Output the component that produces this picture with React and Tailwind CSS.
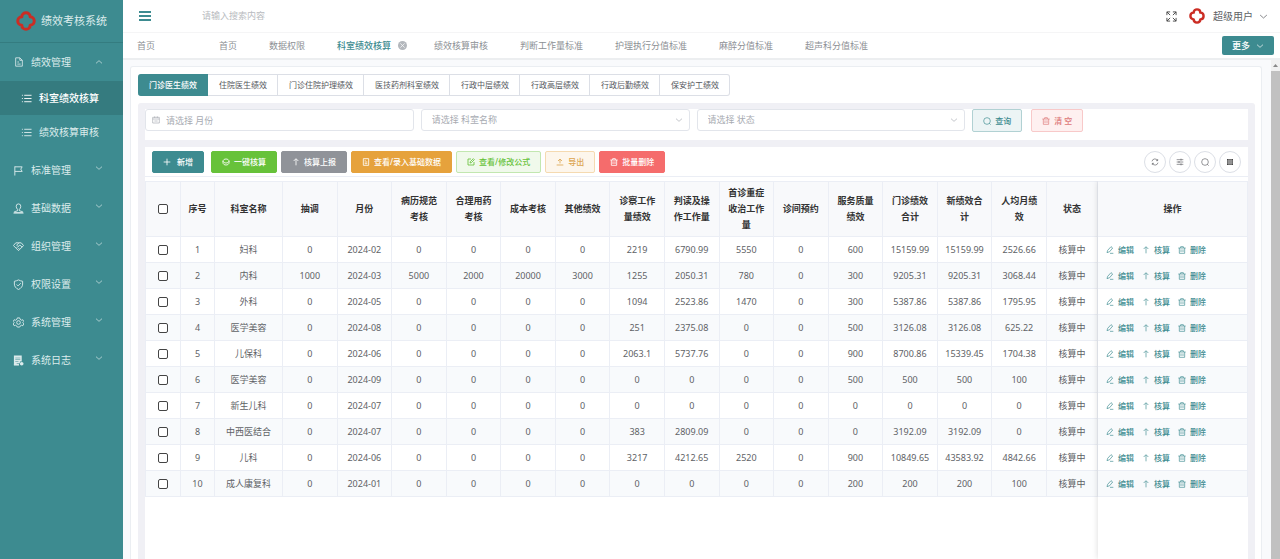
import React, { useState } from "react";

const menus = [
    { name: "标准管理", icon: "flag" },
    { name: "基础数据", icon: "user" },
    { name: "组织管理", icon: "tag" },
    { name: "权限设置", icon: "shield" },
    { name: "系统管理", icon: "gear" },
    { name: "系统日志", icon: "log" },
];

const pageTabs = [
    "首页",
    "数据权限",
    "科室绩效核算",
    "绩效核算审核",
    "判断工作量标准",
    "护理执行分值标准",
    "麻醉分值标准",
    "超声科分值标准",
];

const types = [
    "门诊医生绩效",
    "住院医生绩效",
    "门诊住院护理绩效",
    "医技药剂科室绩效",
    "行政中层绩效",
    "行政高层绩效",
    "行政后勤绩效",
    "保安护工绩效",
];

const columns = [
    "抽调",
    "月份",
    "病历规范考核",
    "合理用药考核",
    "成本考核",
    "其他绩效",
    "诊察工作量绩效",
    "判读及操作工作量",
    "首诊重症收治工作量",
    "诊间预约",
    "服务质量绩效",
    "门诊绩效合计",
    "新绩效合计",
    "人均月绩效",
];

const rows = [
    ["妇科", "0", "2024-02", "0", "0", "0", "0", "2219", "6790.99", "5550", "0", "600", "15159.99", "15159.99", "2526.66"],
    ["内科", "1000", "2024-03", "5000", "2000", "20000", "3000", "1255", "2050.31", "780", "0", "300", "9205.31", "9205.31", "3068.44"],
    ["外科", "0", "2024-05", "0", "0", "0", "0", "1094", "2523.86", "1470", "0", "300", "5387.86", "5387.86", "1795.95"],
    ["医学美容", "0", "2024-08", "0", "0", "0", "0", "251", "2375.08", "0", "0", "500", "3126.08", "3126.08", "625.22"],
    ["儿保科", "0", "2024-06", "0", "0", "0", "0", "2063.1", "5737.76", "0", "0", "900", "8700.86", "15339.45", "1704.38"],
    ["医学美容", "0", "2024-09", "0", "0", "0", "0", "0", "0", "0", "0", "500", "500", "500", "100"],
    ["新生儿科", "0", "2024-07", "0", "0", "0", "0", "0", "0", "0", "0", "0", "0", "0", "0"],
    ["中西医结合", "0", "2024-07", "0", "0", "0", "0", "383", "2809.09", "0", "0", "0", "3192.09", "3192.09", "0"],
    ["儿科", "0", "2024-06", "0", "0", "0", "0", "3217", "4212.65", "2520", "0", "900", "10849.65", "43583.92", "4842.66"],
    ["成人康复科", "0", "2024-01", "0", "0", "0", "0", "0", "0", "0", "0", "200", "200", "200", "100"],
];

const tools = [
    { name: "新增", icon: "plus", cls: "mr-[3px] px-[10px] gap-[6px] bg-[#3d8b90] border-[#3d8b90] text-white" },
    { name: "一键核算", icon: "coin", cls: "px-[10px] gap-1 bg-[#67c23a] border-[#67c23a] text-white" },
    { name: "核算上报", icon: "up", cls: "px-[10px] gap-1 bg-[#909399] border-[#909399] text-white" },
    { name: "查看/录入基础数据", icon: "doc", cls: "px-[10px] gap-1 bg-[#e6a23c] border-[#e6a23c] text-white" },
    { name: "查看/修改公式", icon: "edit", cls: "px-[10px] gap-1 bg-[#f0f9eb] border-[#c2e7b0] text-[#67c23a]" },
    { name: "导出", icon: "upload", cls: "px-[10px] gap-1 bg-[#fdf6ec] border-[#f5dab1] text-[#dca550]" },
    { name: "批量删除", icon: "trash", cls: "px-[10px] gap-1 bg-[#f56c6c] border-[#f56c6c] text-white" },
];

const paths = {
    file: "M4 2h10l6 6v14H4zM14 2v6h6M8 12h4M8 17h8",
    flag: "M4 23V3M4 4h16l-3 5 3 5H4",
    user: "M12 2a5 5 0 0 0-5 5c0 3 1 5 3 7v3l-7 2v2h18v-2l-7-2v-3c2-2 3-4 3-7a5 5 0 0 0-5-5zM1 22h22",
    tag: "M6 4h12l5 6-11 11L1 10zM13 4l-5 5 3 3 4-3 5 4M8 15l3-3M11 18l3-3",
    shield: "M12 2c3 2 6 2 9 3v6c0 5-3 9-9 12-6-3-9-7-9-12V5c3-1 6-1 9-3zM8 12l3 3 6-6",
    gear: "M9.500 2h5l1 3 3 2 3-1 2 4-2 2 2 3-2 4-3-1-3 2-1 2h-5l-1-2-3-2-3 1-2-4 2-3-2-2 2-4 3 1 3-2zM12 8a4 4 0 1 0 0 8 4 4 0 0 0 0-8z",
    list: "M2 5h2M7 5h16M2 12h2M7 12h16M2 19h2M7 19h16",
    down: "M3 8l9 8 9-8",
    upArrow: "M3 16l9-8 9 8",
    plus: "M12 2v20M2 12h20",
    coin: "M3 9c0-3 4-6 9-6s9 3 9 6-4 6-9 6-9-3-9-6v6c0 3 4 6 9 6s9-3 9-6V9",
    up: "M12 22V3M5 9l7-7 7 7",
    doc: "M4 2h16v20H4zM8 7h3M8 12h8M8 17h8",
    edit: "M12 3H3v18h18v-9M9 15l1-4 9-9 3 3-9 9z",
    upload: "M2 21h20M12 16V4M6 9l6-6 6 6",
    trash: "M1 6h22M8 6V2h8v4M4 6v16h16V6M9 10v8M15 10v8",
    search: "M12 2a10 10 0 1 0 0 20 10 10 0 0 0 0-20zM19 19l4 4",
    refresh: "M3 10a9 9 0 0 1 17-2M20 3v5h-5M21 14a9 9 0 0 1-17 2M4 21v-5h5",
    setting: "M2 5h20M2 12h20M2 19h20M15 2v6M9 9v6M15 16v6",
    calendar: "M2 4h20v17H2zM2 9h20M8 1v5M16 1v5M7 15h10",
    pen: "M3 20l2-7L15 2l5 4-9 11zM12 22h10",
    full: "M2 9V2h7M2 2l7 7M15 2h7v7M22 2l-7 7M2 15v7h7M2 22l7-7M22 15v7h-7M22 22l-7-7",
};

const Icon = ({ name, className = "size-2", width = 2 }) => (
    <svg
        viewBox="0 0 24 24"
        className={`shrink-0 ${className}`}
        fill="none"
        stroke="currentColor"
        strokeWidth={width}
        strokeLinejoin="round"
        aria-hidden="true"
    >
        <path d={paths[name]} />
    </svg>
);

const Logo = ({ className, inner = "none" }) => (
    <svg viewBox="0 0 24 24" className={`shrink-0 ${className}`} aria-hidden="true">
        <path
            d="M7 7C7 .5 17 .5 17 7c6.500 0 6.500 10 0 10 0 6.500-10 6.500-10 0C.5 17 .5 7 7 7z"
            fill={inner}
            stroke="#cb2d24"
            strokeWidth="3.600"
            strokeLinejoin="round"
        />
    </svg>
);

// Icône du journal, pleine avec une petite pastille
const LogIcon = () => (
    <svg viewBox="0 0 24 24" className="size-[11px] shrink-0" fill="currentColor" aria-hidden="true">
        <path fillRule="evenodd" d="M2 1h17v13h-4v4H8v4H2zM5 6v1h11V6zM5 10v1h11v-1zM5 14v1h7v-1z" />
        <path d="M2 19h11v4H2z" />
        <circle cx="19" cy="19" r="4" />
    </svg>
);

const Checkbox = ({ label }) => (
    <input
        type="checkbox"
        aria-label={label}
        className="block mx-auto size-[10px] appearance-none rounded-[2px] border border-[#444] bg-white checked:bg-[#3d8b90]"
    />
);

const Sidebar = () => (
    <aside className="w-[123px] shrink-0 bg-[#3d8b90] text-[#dcebec] text-[10px]">
        <div className="flex h-[43px] items-center gap-[5px] border-b border-[#347c80] pl-4 text-[11px]">
            <Logo className="size-5" />
            <h1>绩效考核系统</h1>
        </div>
        <nav>
            <button className="flex h-[38px] w-full items-center pl-[14px] pr-5">
                <Icon name="file" className="size-[10px]" />
                <span className="ml-[7px] flex-1 text-left">绩效管理</span>
                <Icon name="upArrow" className="size-2" />
            </button>
            <div className="pb-[2px]">
                <a href="#calc" className="flex h-[34px] items-center gap-[7px] bg-[#357b7f] pl-[21px] font-medium text-white">
                    <Icon name="list" className="size-[11px]" />
                    科室绩效核算
                </a>
                <a href="#audit" className="flex h-[34px] items-center gap-[7px] pl-[21px]">
                    <Icon name="list" className="size-[11px]" />
                    绩效核算审核
                </a>
            </div>
            {menus.map((m) => (
                <button key={m.name} className="flex h-[38px] w-full items-center pl-[13px] pr-5">
                    {m.icon === "log" ? <LogIcon /> : <Icon name={m.icon} className="size-[11px]" />}
                    <span className="ml-[7px] flex-1 text-left">{m.name}</span>
                    <Icon name="down" className="size-2 mb-1" />
                </button>
            ))}
        </nav>
    </aside>
);

const Header = () => (
    <header className="shrink-0 border-b-2 border-[#eceef0] bg-white">
        <div className="flex h-[33px] items-center border-b border-[#f5f5f6] pl-4 pr-3">
            <button aria-label="菜单" className="flex w-3 flex-col gap-[2px]">
                <span className="h-[2px] bg-[#3d8b90]"></span>
                <span className="h-[2px] bg-[#3d8b90]"></span>
                <span className="h-[2px] bg-[#3d8b90]"></span>
            </button>
            <input
                type="text"
                aria-label="搜索"
                placeholder="请输入搜索内容"
                className="ml-[51px] w-40 text-[9px] outline-none placeholder:text-[#b8bbc0]"
            />
            <div className="ml-auto flex items-center text-[#606266]">
                <button aria-label="全屏">
                    <Icon name="full" className="size-[11px] text-[#444]" />
                </button>
                <Logo className="ml-3 size-4" inner="#fff" />
                <button className="ml-2 flex items-center gap-[6px] text-[10px]">
                    超级用户
                    <Icon name="down" className="size-[9px]" />
                </button>
            </div>
        </div>
        <div className="flex h-[25px] items-center pl-[14px] pr-[6px] text-[9px] text-[#8c8f94]">
            <span className="w-[66px]">首页</span>
            <nav className="flex flex-1">
                {pageTabs.map((t) =>
                    t === "科室绩效核算" ? (
                        <div key={t} className="flex items-center gap-[7px] pl-4 pr-[11px] font-medium text-[#3d8b90]">
                            <a href="#tab">{t}</a>
                            <button
                                aria-label="关闭"
                                className="flex size-[9px] items-center justify-center rounded-full bg-[#b4b8bd] text-white"
                            >
                                <svg viewBox="0 0 10 10" className="size-[7px]" stroke="currentColor" aria-hidden="true">
                                    <path d="M2 2l6 6M8 2l-6 6" />
                                </svg>
                            </button>
                        </div>
                    ) : (
                        <a key={t} href="#tab" className="px-4">
                            {t}
                        </a>
                    )
                )}
            </nav>
            <button className="flex h-[19px] items-center gap-[6px] rounded-[2px] bg-[#3d8b90] px-[10px] text-[9px] font-medium text-white">
                更多
                <Icon name="down" className="size-2" />
            </button>
        </div>
    </header>
);

const SelectBox = ({ label }) => (
    <div className="relative mr-[7px]">
        <select
            aria-label={label}
            defaultValue=""
            className="block h-[22px] w-full appearance-none rounded-[3px] border border-[#e2e5eb] bg-white pl-[10px] text-[9px] text-[#a8abb2] outline-none"
        >
            <option value="">请选择 {label}</option>
        </select>
        <Icon name="down" className="pointer-events-none absolute right-[7px] top-[7px] size-2 text-[#a8abb2]" />
    </div>
);

const Filters = () => (
    <form className="grid grid-cols-4 bg-white pb-2" onSubmit={(e) => e.preventDefault()}>
        <div className="relative mr-[7px]">
            <Icon name="calendar" className="absolute left-[7px] top-[7px] size-2 text-[#a8abb2]" />
            <input
                type="text"
                aria-label="月份"
                placeholder="请选择 月份"
                className="block h-[22px] w-full rounded-[3px] border border-[#e2e5eb] bg-white pl-5 text-[9px] outline-none placeholder:text-[#a8abb2]"
            />
        </div>
        <SelectBox label="科室名称" />
        <SelectBox label="状态" />
        <div className="flex items-start gap-[9px] text-[8px] font-medium">
            <button className="flex h-[23px] items-center gap-1 rounded-[2px] border border-[#b1d1d3] bg-[#ecf4f5] px-[10px] text-[#3d8b90]">
                <Icon name="search" />
                查询
            </button>
            <button
                type="reset"
                className="flex h-[23px] items-center gap-1 rounded-[2px] border border-[#f8c9c9] bg-[#fef0f0] px-[10px] text-[#dd7777]"
            >
                <Icon name="trash" />
                清 空
            </button>
        </div>
    </form>
);

const Toolbar = () => (
    <div className="flex h-[30px] items-center gap-1 border-b border-[#ebeef5] px-[7px]">
        {tools.map((t) => (
            <button
                key={t.name}
                className={`flex h-[22px] items-center whitespace-nowrap rounded-[2px] border text-[8px] font-medium ${t.cls}`}
            >
                <Icon name={t.icon} width={2.5} />
                {t.name}
            </button>
        ))}
        <div className="ml-auto flex gap-[3px] text-[#606266]">
            {["refresh", "setting", "search"].map((n) => (
                <button
                    key={n}
                    aria-label={n}
                    className="flex size-[22px] items-center justify-center rounded-full border border-[#dcdfe6]"
                >
                    <Icon name={n} />
                </button>
            ))}
            <button
                aria-label="grid"
                className="flex size-[22px] items-center justify-center rounded-full border border-[#dcdfe6] text-[#444]"
            >
                <svg viewBox="0 0 8 8" className="size-2" fill="currentColor" aria-hidden="true">
                    <path d="M1 1h6v6H1z" />
                    <path d="M1 3h6M1 5h6M3 1v6M5 1v6" stroke="#fff" strokeWidth=".5" />
                </svg>
            </button>
        </div>
    </div>
);

const DataTable = () => (
    <div className="relative mt-1 flex-1 overflow-hidden">
        <table className="w-full table-fixed border-collapse text-center text-[9px] leading-4 text-[#606266]">
            <colgroup>
                <col className="w-[35px]" />
                <col className="w-[34px]" />
                <col className="w-[68px]" />
                {columns.map((c) => (
                    <col key={c} />
                ))}
                <col className="w-[51px]" />
                <col className="w-[150px]" />
            </colgroup>
            <thead>
                <tr className="h-[55px] bg-[#f8f9fb] text-[#333]">
                    <th className="border border-[#ebeef5]">
                        <Checkbox label="全选" />
                    </th>
                    <th className="border border-[#ebeef5]">序号</th>
                    <th className="border border-[#ebeef5]">科室名称</th>
                    {columns.map((c) => (
                        <th key={c} className="border border-[#ebeef5] px-2">
                            {c}
                        </th>
                    ))}
                    <th className="border border-[#ebeef5]">状态</th>
                    <th className="border border-[#ebeef5]">操作</th>
                </tr>
            </thead>
            <tbody>
                {rows.map((row, i) => (
                    <tr key={i} className="h-[26px] even:bg-[#f8fafc]">
                        <td className="border border-[#ebeef5]">
                            <Checkbox label={`选择 ${i + 1}`} />
                        </td>
                        <td className="border border-[#ebeef5]">{i + 1}</td>
                        {row.map((v, j) => (
                            <td key={j} className="border border-[#ebeef5]">
                                {v}
                            </td>
                        ))}
                        <td className="border border-[#ebeef5]">核算中</td>
                        <td className="border border-[#ebeef5] pl-2">
                            <div className="flex items-center gap-2 text-[8px] font-medium text-[#3d8b90]">
                                <button className="flex items-center gap-1">
                                    <Icon name="pen" />
                                    编辑
                                </button>
                                <button className="flex items-center gap-1">
                                    <Icon name="up" />
                                    核算
                                </button>
                                <button className="flex items-center gap-1">
                                    <Icon name="trash" />
                                    删除
                                </button>
                            </div>
                        </td>
                    </tr>
                ))}
            </tbody>
        </table>
        <div className="pointer-events-none absolute inset-y-0 right-0 w-[150px] shadow-[0_0_6px_rgba(0,0,0,0.15)]"></div>
    </div>
);

export default function App() {
    const [type, setType] = useState(types[0]);

    return (
        <div className="flex h-screen overflow-hidden bg-[#f9fafc] font-['Noto_Sans','Noto_Sans_CJK_SC',sans-serif]">
            <Sidebar />
            <div className="flex min-w-0 flex-1 flex-col">
                <Header />
                <div className="flex min-h-0 flex-1">
                    <main className="flex min-w-0 flex-1 flex-col pl-[7px] pr-[9px] pt-[6px]">
                        <div className="flex flex-1 flex-col rounded-t-[3px] border border-b-0 border-[#ebeef2] bg-white pl-[7px] pr-[6px] pt-[7px]">
                            <div className="flex">
                                {types.map((t) => (
                                    <button
                                        key={t}
                                        onClick={() => setType(t)}
                                        className={`h-[22px] border border-l-0 pl-[11px] pr-[10px] text-[8px] first:rounded-l-[3px] last:rounded-r-[3px] ${
                                            t === type
                                                ? "border-[#3d8b90] bg-[#3d8b90] font-medium text-white"
                                                : "border-[#dcdfe6] bg-white text-[#55585d]"
                                        }`}
                                    >
                                        {t}
                                    </button>
                                ))}
                            </div>
                            <div className="mt-[7px] flex flex-1 flex-col gap-[7px] rounded-t-[3px] bg-[#f0f0f5] px-[7px] pt-[6px]">
                                <Filters />
                                <div className="flex flex-1 flex-col bg-white">
                                    <Toolbar />
                                    <DataTable />
                                </div>
                            </div>
                        </div>
                    </main>
                    <div className="flex w-[9px] flex-col bg-[#f1f1f1]" aria-hidden="true">
                        <svg viewBox="0 0 9 11" className="h-[11px] w-[9px]" fill="#888">
                            <path d="M2 7l2.500-3L7 7z" />
                        </svg>
                        <div className="flex-1 bg-[#c1c1c1]"></div>
                    </div>
                </div>
            </div>
        </div>
    );
}
